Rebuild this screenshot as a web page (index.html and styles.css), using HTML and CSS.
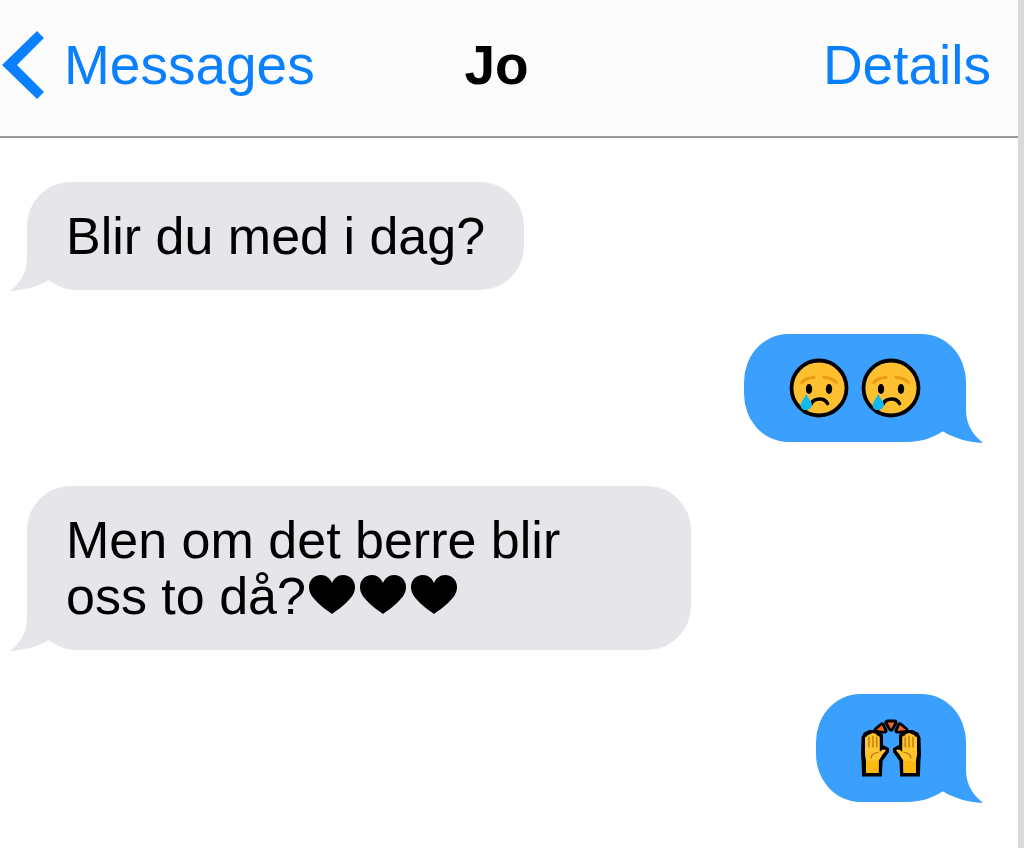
FILE: index.html
```html
<!DOCTYPE html>
<html lang="nn">
<head>
    <meta charset="UTF-8">
    <meta name="viewport" content="width=device-width, initial-scale=1.0">
    <title>Messages - Jo</title>
    <link rel="stylesheet" href="styles.css">
</head>
<body>
    <!-- Shared shapes -->
    <svg class="sprite" aria-hidden="true">
        <symbol id="tail" viewBox="0 0 58 62">
            <path d="M17 0 V28 C17 43 11 53 0 62 C16 61 29 57 39 51 L58 40 V0 Z"/>
        </symbol>
        <symbol id="heart" viewBox="0 0 46 39">
            <path fill="#000" d="M23 39 C21 37 14 33 9 28 C3 22 0 18 0 12 C0 5 5 0 12 0 C17 0 21 3 23 8 C25 3 29 0 34 0 C41 0 46 5 46 12 C46 18 43 22 37 28 C32 33 25 37 23 39 Z"/>
        </symbol>
        <symbol id="crying" viewBox="0 0 60 60">
            <circle cx="30" cy="30" r="27.5" fill="#fec02f" stroke="#000" stroke-width="3.8"/>
            <path d="M12.7 24.5 Q17 20 25 19.2 M35 19.2 Q43 20 47.5 24.5" fill="none" stroke="#ec9a13" stroke-width="3" stroke-linecap="round"/>
            <ellipse cx="20" cy="31" rx="3.2" ry="5"/>
            <ellipse cx="40" cy="31" rx="3.2" ry="5"/>
            <path d="M22 46 Q24 41 31 41 Q36 41 38.5 45.5" fill="none" stroke="#000" stroke-width="3.6" stroke-linecap="round"/>
            <path d="M17.3 36 C19 40 23 43.5 23 47 C22.5 50.5 20 52 17 52 C13.5 52 11.5 50 11.7 47 C12 43.5 15.5 40 17.3 36 Z" fill="#12b9f0"/>
        </symbol>
        <symbol id="hand" viewBox="0 0 30 60">
            <path d="M3.5 20 L5 17 L9 15 H16 L19 18 V32 L22.5 30.5 L25 32 V33 L18.6 42 L18 55.5 H4 L3.5 42 L3 36 Z" fill="#000" stroke="#000" stroke-width="6"/>
            <path d="M4 20 Q4 18 6 18.5 Q6.5 16 9 16.5 Q11 14 13 15.5 Q15.5 15 16 17.5 Q18.8 17.5 18.8 20 V34 Q21.5 30.5 25 32 Q24 34 21.5 36.5 Q19.5 40 17.8 42.5 L17.5 55 H5 L5 42 L4 37 Z" fill="#fec62c"/>
            <path d="M5 43 H17.7 L17.5 55 H5 Z" fill="#fdb90e"/>
            <path d="M8 19 V29 M12 18 V29 M15.8 19 V29 M10 40 Q11 35 17 34.5" fill="none" stroke="#b66b16" stroke-width="1.2" stroke-linecap="round"/>
        </symbol>
        <symbol id="raised" viewBox="0 0 60 60">
            <path d="M26.5 4.5 H33.5 L30 10.5 Z M21 7.5 L23.5 12.5 L15.5 12 Z M39 7.5 L36.5 12.5 L44.5 12 Z" fill="#000" stroke="#000" stroke-width="6" stroke-linejoin="round"/>
            <use href="#hand" width="30" height="60"/>
            <use href="#hand" width="30" height="60" transform="translate(60 0) scale(-1 1)"/>
            <path d="M26.5 4.5 H33.5 L30 11 Z M21 7 L23.5 13 L15.5 12 Z M39 7 L36.5 13 L44.5 12 Z" fill="#f26522"/>
        </symbol>
    </svg>

    <!-- Header -->
    <header>
        <a class="back" href="#messages">
            <svg class="chevron" viewBox="0 0 42 68" aria-hidden="true">
                <path d="M35 0 L42 7 L15 34 L42 61 L35 68 L0 34 Z"/>
            </svg>
            Messages
        </a>
        <h1>Jo</h1>
        <a class="details" href="#details">Details</a>
    </header>

    <!-- Conversation -->
    <main class="conversation">
        <div class="bubble received">
            <svg class="tail" aria-hidden="true"><use href="#tail"/></svg>
            <p>Blir du med i dag?</p>
        </div>

        <div class="bubble sent">
            <svg class="tail" aria-hidden="true"><use href="#tail"/></svg>
            <svg class="emoji" role="img" aria-label="Crying face"><use href="#crying"/></svg>
            <svg class="emoji" role="img" aria-label="Crying face"><use href="#crying"/></svg>
        </div>

        <div class="bubble received">
            <svg class="tail" aria-hidden="true"><use href="#tail"/></svg>
            <p>Men om det berre blir oss to då?<span class="hearts"><svg role="img" aria-label="Heart"><use href="#heart"/></svg><svg role="img" aria-label="Heart"><use href="#heart"/></svg><svg role="img" aria-label="Heart"><use href="#heart"/></svg></span></p>
        </div>

        <div class="bubble sent">
            <svg class="tail" aria-hidden="true"><use href="#tail"/></svg>
            <svg class="emoji" role="img" aria-label="Raised hands"><use href="#raised"/></svg>
        </div>
    </main>
</body>
</html>
```
FILE: styles.css
```css
* {
    margin: 0;
    padding: 0;
    box-sizing: border-box;
    font-family: "Liberation Sans", Arial, sans-serif;
}

body {
    min-height: 100vh;
    background: #fff;
    color: #000;
    border-right: 6px solid #d9d9d9;
}

.sprite {
    display: none;
}

/* Header */
header {
    display: grid;
    grid-template-columns: 1fr auto 1fr;
    align-items: center;
    padding: 33px 27px 39px 2px;
    background: #fcfcfc;
    border-bottom: 2px solid #9a9a9c;
    font-size: 55px;
    line-height: 64px;
}

header h1 {
    font-size: 55px;
}

header a {
    color: #0a80ff;
    text-decoration: none;
}

.back {
    display: flex;
    align-items: center;
    gap: 20px;
    height: 64px;
}

.chevron {
    width: 42px;
    height: 68px;
    fill: #0a80ff;
}

.details {
    justify-self: end;
}

/* Conversation */
.conversation {
    display: flex;
    flex-direction: column;
    gap: 44px;
    padding: 44px 52px 44px 27px;
}

.bubble {
    position: relative;
    isolation: isolate;
    max-width: 664px;
    font-size: 52px;
    line-height: 56px;
}

.received {
    align-self: flex-start;
    padding: 26px 39px;
    background: #e5e5ea;
    border-radius: 44px 44px 44px 50px / 44px 44px 44px 56px;
}

.sent {
    display: flex;
    align-self: flex-end;
    gap: 12px;
    padding: 24px 45px;
    background: #3b9ffe;
    border-radius: 44px 44px 60px 44px / 48px 48px 50px 48px;
}

/* Sits over the bubble's corner but under its text */
.tail {
    position: absolute;
    z-index: -1;
    bottom: -1px;
    left: -17px;
    width: 58px;
    height: 62px;
    fill: #e5e5ea;
}

.sent .tail {
    left: auto;
    right: -17px;
    fill: #3b9ffe;
    transform: scaleX(-1);
}

.emoji {
    width: 60px;
    height: 60px;
}

.hearts {
    display: inline-flex;
    gap: 5px;
    margin-left: 3px;
}

.hearts svg {
    width: 46px;
    height: 39px;
}
```
